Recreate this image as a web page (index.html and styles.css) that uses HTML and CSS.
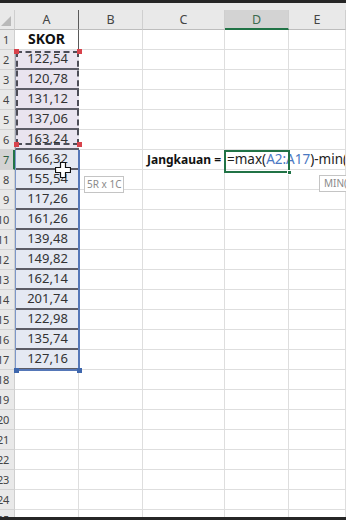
FILE: index.html
```html
<!DOCTYPE html>
<html>
<head>
<meta charset="utf-8">
<link rel="stylesheet" href="styles.css">
</head>
<body>
<div class="app">
  <div class="topbar"></div>
  <div class="gap"></div>
  <div class="sheet">
    <div class="corner"><svg width="12" height="12" viewBox="0 0 12 12"><polygon points="11,1 11,11 1,11" fill="#b9b9b9"/></svg></div>
    <div class="ch ch-a">A</div><div class="ch">B</div><div class="ch">C</div><div class="ch ch-active">D</div><div class="ch">E</div>

    <div class="rh">1</div><div class="c a-head">SKOR</div><div class="c"></div><div class="c"></div><div class="c"></div><div class="c"></div>
    <div class="rh">2</div><div class="c a-data a-copy">122,54</div><div class="c"></div><div class="c"></div><div class="c"></div><div class="c"></div>
    <div class="rh">3</div><div class="c a-data a-copy">120,78</div><div class="c"></div><div class="c"></div><div class="c"></div><div class="c"></div>
    <div class="rh">4</div><div class="c a-data a-copy">131,12</div><div class="c"></div><div class="c"></div><div class="c"></div><div class="c"></div>
    <div class="rh">5</div><div class="c a-data a-copy">137,06</div><div class="c"></div><div class="c"></div><div class="c"></div><div class="c"></div>
    <div class="rh">6</div><div class="c a-data a-copy">163,24</div><div class="c"></div><div class="c"></div><div class="c"></div><div class="c"></div>
    <div class="rh rh-active">7</div><div class="c a-data a-sel">166,32</div><div class="c"></div><div class="c label">Jangkauan =</div><div class="c formula"><span>=max(</span><span class="ref">A2:A17</span><span>)-min(</span></div><div class="c"></div>
    <div class="rh">8</div><div class="c a-data a-sel">155,54</div><div class="c"></div><div class="c"></div><div class="c"></div><div class="c"></div>
    <div class="rh">9</div><div class="c a-data a-sel">117,26</div><div class="c"></div><div class="c"></div><div class="c"></div><div class="c"></div>
    <div class="rh">10</div><div class="c a-data a-sel">161,26</div><div class="c"></div><div class="c"></div><div class="c"></div><div class="c"></div>
    <div class="rh">11</div><div class="c a-data a-sel">139,48</div><div class="c"></div><div class="c"></div><div class="c"></div><div class="c"></div>
    <div class="rh">12</div><div class="c a-data a-sel">149,82</div><div class="c"></div><div class="c"></div><div class="c"></div><div class="c"></div>
    <div class="rh">13</div><div class="c a-data a-sel">162,14</div><div class="c"></div><div class="c"></div><div class="c"></div><div class="c"></div>
    <div class="rh">14</div><div class="c a-data a-sel">201,74</div><div class="c"></div><div class="c"></div><div class="c"></div><div class="c"></div>
    <div class="rh">15</div><div class="c a-data a-sel">122,98</div><div class="c"></div><div class="c"></div><div class="c"></div><div class="c"></div>
    <div class="rh">16</div><div class="c a-data a-sel">135,74</div><div class="c"></div><div class="c"></div><div class="c"></div><div class="c"></div>
    <div class="rh">17</div><div class="c a-data a-sel">127,16</div><div class="c"></div><div class="c"></div><div class="c"></div><div class="c"></div>
    <div class="rh">18</div><div class="c"></div><div class="c"></div><div class="c"></div><div class="c"></div><div class="c"></div>
    <div class="rh">19</div><div class="c"></div><div class="c"></div><div class="c"></div><div class="c"></div><div class="c"></div>
    <div class="rh">20</div><div class="c"></div><div class="c"></div><div class="c"></div><div class="c"></div><div class="c"></div>
    <div class="rh">21</div><div class="c"></div><div class="c"></div><div class="c"></div><div class="c"></div><div class="c"></div>
    <div class="rh">22</div><div class="c"></div><div class="c"></div><div class="c"></div><div class="c"></div><div class="c"></div>
    <div class="rh">23</div><div class="c"></div><div class="c"></div><div class="c"></div><div class="c"></div><div class="c"></div>
    <div class="rh">24</div><div class="c"></div><div class="c"></div><div class="c"></div><div class="c"></div><div class="c"></div>
    <div class="rh">25</div><div class="c"></div><div class="c"></div><div class="c"></div><div class="c"></div><div class="c"></div>

    <div class="copy-box"></div>
    <div class="sq red sq-tl"></div>
    <div class="sq red sq-tr"></div>
    <div class="sq red sq-bl"></div>
    <div class="sq red sq-br"></div>

    <div class="sel-box"></div>
    <div class="sq blue sq-sbl"></div>
    <div class="sq blue sq-sbr"></div>

    <div class="active-box"><div class="handle"></div></div>

    <div class="tip tip-size">5R x 1C</div>
    <div class="tip tip-min">MIN(number1, [number2], ...)</div>

    <svg class="cursor" width="16" height="16" viewBox="0 0 16 16">
      <path d="M5.5 0.5 H10.5 V5.5 H15.5 V10.5 H10.5 V15.5 H5.5 V10.5 H0.5 V5.5 H5.5 Z" fill="#ffffff" stroke="#111111" stroke-width="1.2"/>
    </svg>
  </div>
  <div class="bottombar"></div>
</div>
</body>
</html>
```

FILE: styles.css
```css
* { box-sizing: border-box; }
html, body { margin: 0; padding: 0; }
body {
  width: 346px;
  height: 520px;
  overflow: hidden;
  background: #ffffff;
  font-family: "Noto Sans", "Open Sans", sans-serif;
}
.app {
  display: flex;
  flex-direction: column;
  height: 520px;
}
.topbar { height: 3px; background: #262626; flex: none; }
.gap { height: 7px; background: #e9e9e9; flex: none; }
.bottombar { height: 3px; background: #262626; flex: none; }
.sheet {
  position: relative;
  flex: 1;
  overflow: hidden;
  display: grid;
  grid-template-columns: 15px 64px 64px 82px 64px 1fr;
  grid-auto-rows: 20px;
  font-size: 13px;
  color: #262626;
}
.corner {
  background: #e9e9e9;
  border-right: 1px solid #cfcfcf;
  border-bottom: 1px solid #bdbdbd;
  display: flex;
  align-items: flex-end;
  justify-content: flex-end;
  padding: 0 2px 2px 0;
}
.ch {
  background: #e9e9e9;
  border-right: 1px solid #cfcfcf;
  border-bottom: 1px solid #bdbdbd;
  display: flex;
  align-items: center;
  justify-content: center;
  color: #444;
  font-size: 12.5px;
}
.ch-a { border-right: 1px solid #5a5a5a; }
.ch-active {
  background: #d3d3d3;
  border-bottom: 2px solid #217346;
  color: #3c6b4f;
}
.rh {
  background: #e9e9e9;
  border-right: 1px solid #cfcfcf;
  border-bottom: 1px solid #d4d4d4;
  display: flex;
  align-items: center;
  justify-content: flex-end;
  padding-right: 5px;
  color: #444;
  font-size: 11px;
  letter-spacing: -0.3px;
  white-space: nowrap;
}
.rh-active {
  background: #d3d3d3;
  border-right: 2px solid #217346;
  padding-right: 4px;
  color: #2f5e41;
}
.c {
  border-right: 1px solid #dedede;
  border-bottom: 1px solid #dedede;
  display: flex;
  align-items: flex-end;
  padding-bottom: 1px;
  white-space: nowrap;
}
.a-head {
  justify-content: center;
  font-weight: bold;
  font-size: 14px;
  border-right: 1px solid #5a5a5a;
  color: #111;
}
.a-data {
  justify-content: center;
  border-bottom: 2px solid #5c5c66;
  border-right: none;
  border-left: 1px solid #9aa0b0;
  color: #333;
}
.a-copy { background: #e9e4ef; }
.a-sel { background: #e5e9f3; }
.label {
  justify-content: flex-end;
  font-weight: bold;
  font-size: 12px;
  padding-right: 3px;
  color: #111;
}
.formula {
  justify-content: flex-start;
  padding-left: 2px;
  color: #222;
  font-size: 13.5px;
}
.ref { color: #4a78c2; }

.copy-box {
  position: absolute;
  left: 16px;
  top: 41px;
  width: 63px;
  height: 94px;
  border: 2px dashed #4d4d57;
}
.sq { position: absolute; width: 5px; height: 5px; }
.red { background: #d8434c; }
.blue { background: #3f67ad; }
.sq-tl { left: 14px; top: 39px; }
.sq-tr { left: 77px; top: 39px; }
.sq-bl { left: 14px; top: 132px; }
.sq-br { left: 77px; top: 132px; }

.sel-box {
  position: absolute;
  left: 15px;
  top: 140px;
  width: 65px;
  height: 221px;
  border-left: 1px solid #7d97c9;
  border-right: 2px solid #5577b8;
  border-bottom: 2px solid #5577b8;
}
.sq-sbl { left: 14px; top: 358px; }
.sq-sbr { left: 77px; top: 358px; }

.active-box {
  position: absolute;
  left: 224px;
  top: 140px;
  width: 66px;
  height: 23px;
  border: 2px solid #217346;
}
.handle {
  position: absolute;
  right: -4px;
  bottom: -4px;
  width: 5px;
  height: 5px;
  background: #217346;
  border: 1px solid #ffffff;
}

.tip {
  position: absolute;
  background: #ffffff;
  border: 1px solid #c4c4c4;
  color: #8a8a8a;
  font-size: 10px;
  line-height: 15px;
  padding: 0 2px;
  white-space: nowrap;
}
.tip-size { left: 84px; top: 166px; height: 17px; }
.tip-min { left: 319px; top: 165px; height: 17px; padding: 0 4px; }

.cursor {
  position: absolute;
  left: 55px;
  top: 152px;
}
```
